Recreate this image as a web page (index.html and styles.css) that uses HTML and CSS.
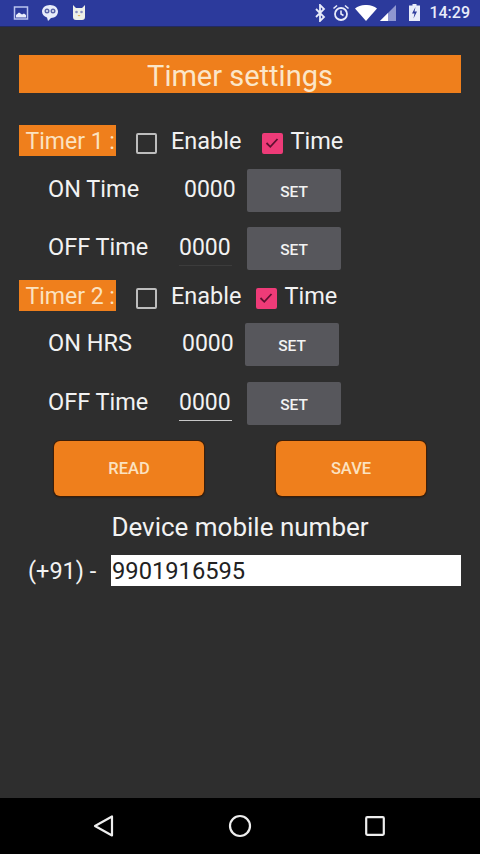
FILE: index.html
```html
<!DOCTYPE html>
<html lang="en">
<head>
<meta charset="utf-8">
<title>Timer settings</title>
<link rel="stylesheet" href="styles.css">
</head>
<body>
<div class="statusbar">
  <div class="status-left">
    <svg class="ic" width="16" height="16" viewBox="0 0 16 16"><rect x="1.5" y="2" width="13" height="12" fill="none" stroke="#b9c3ee" stroke-width="1.5"/><path d="M3 12.5V10l3-2.5 3 2 2-1 2 1.5v2.500z" fill="#e8ecfa"/></svg>
    <svg class="ic" width="20" height="18" viewBox="0 0 20 18"><path d="M10 1c4.500 0 8 2.800 8 6.500S15 14 11 14l-3 3-1-3.500C4 12.500 2 10.500 2 7.500 2 3.800 5.500 1 10 1z" fill="#e8ecfa"/><circle cx="7" cy="7" r="2.500" fill="#5a64a8"/><circle cx="13" cy="7" r="2.500" fill="#5a64a8"/><circle cx="7" cy="7" r="1" fill="#e8ecfa"/><circle cx="13" cy="7" r="1" fill="#e8ecfa"/></svg>
    <svg class="ic" width="16" height="18" viewBox="0 0 16 18"><path d="M2 1l3 3h6l3-3v12a3 3 0 0 1-3 3H5a3 3 0 0 1-3-3z" fill="#eef0e8"/><circle cx="5.500" cy="8" r="1.300" fill="#8a8fc0"/><circle cx="10.500" cy="8" r="1.300" fill="#8a8fc0"/><path d="M6.500 11h3l-1.500 1.500z" fill="#e0b050"/></svg>
  </div>
  <div class="status-right">
    <svg width="14" height="18" viewBox="0 0 14 18"><path d="M3 5l8 8-4 4V1l4 4-8 8" fill="none" stroke="#e8ecfa" stroke-width="1.800"/></svg>
    <svg width="18" height="18" viewBox="0 0 18 18"><circle cx="9" cy="10" r="6" fill="none" stroke="#e8ecfa" stroke-width="1.800"/><path d="M9 6.500V10l2.500 1.500M1.500 4.500L5 1.500M16.500 4.500L13 1.500" fill="none" stroke="#e8ecfa" stroke-width="1.600"/></svg>
    <svg width="22" height="16" viewBox="0 0 22 16"><path d="M0 3.500C6-1.200 16-1.200 22 3.500L11 16z" fill="#fff"/></svg>
    <svg class="sig" width="16" height="16" viewBox="0 0 16 16"><path d="M16 0v16H0z" fill="#8f97d0"/><path d="M8 8v8H0z" fill="#fff"/></svg>
    <svg class="bat" width="11" height="17" viewBox="0 0 11 17"><path d="M3.500 0h4v1.500H11V17H0V1.500h3.500z" fill="#e8ecfa"/><path d="M6.500 3L3 9.500h2.500L4.500 14.500 8 7.500H5.500z" fill="#2c3a9c"/></svg>
    <span class="clock">14:29</span>
  </div>
</div>

<main class="screen">
  <h1 class="title">Timer settings</h1>

  <div class="timer-row first">
    <span class="tag">Timer 1 :</span>
    <span class="box"></span>
    <span class="opt enable">Enable</span>
    <span class="box on on-a"><svg width="14" height="12" viewBox="0 0 14 12"><path d="M1.500 6l3.800 3.800L12.500 2" fill="none" stroke="#5e1030" stroke-width="1.800"/></svg></span>
    <span class="opt time-a">Time</span>
  </div>
  <div class="set-row r1">
    <span class="name">ON Time</span>
    <span class="val v1">0000</span>
    <button class="set">SET</button>
  </div>
  <div class="set-row r2">
    <span class="name">OFF Time</span>
    <span class="val v2 faint">0000</span>
    <button class="set">SET</button>
  </div>

  <div class="timer-row second">
    <span class="tag">Timer 2 :</span>
    <span class="box"></span>
    <span class="opt enable">Enable</span>
    <span class="box on on-b"><svg width="14" height="12" viewBox="0 0 14 12"><path d="M1.500 6l3.800 3.800L12.500 2" fill="none" stroke="#5e1030" stroke-width="1.800"/></svg></span>
    <span class="opt time-b">Time</span>
  </div>
  <div class="set-row r3">
    <span class="name">ON HRS</span>
    <span class="val v3">0000</span>
    <button class="set">SET</button>
  </div>
  <div class="set-row r4">
    <span class="name">OFF Time</span>
    <span class="val v2 line">0000</span>
    <button class="set">SET</button>
  </div>

  <div class="actions">
    <button class="action">READ</button>
    <button class="action">SAVE</button>
  </div>

  <p class="device">Device mobile number</p>
  <div class="phone">
    <span class="prefix">(+91) -</span>
    <span class="number">9901916595</span>
  </div>
</main>

<nav class="navbar">
  <svg width="22" height="24" viewBox="0 0 22 24"><path d="M2 12L19 2.500v19z" fill="none" stroke="#eee" stroke-width="2.200" stroke-linejoin="round"/></svg>
  <svg width="24" height="24" viewBox="0 0 24 24"><circle cx="12" cy="12" r="10" fill="none" stroke="#eee" stroke-width="2.200"/></svg>
  <svg width="20" height="20" viewBox="0 0 20 20"><rect x="1.200" y="1.200" width="17.600" height="17.600" rx="1" fill="none" stroke="#eee" stroke-width="2.200"/></svg>
</nav>
</body>
</html>
```
FILE: styles.css
```css
* { box-sizing: border-box; }
html, body { margin: 0; padding: 0; }
body {
  width: 480px;
  height: 854px;
  display: flex;
  flex-direction: column;
  background: #2e2e2e;
  color: #f2f2f2;
  font-family: Roboto, "Liberation Sans", sans-serif;
  overflow: hidden;
}
.statusbar {
  height: 27px;
  flex: none;
  background: #2c3a9c;
  border-bottom: 1px solid #222a60;
  display: flex;
  justify-content: space-between;
  align-items: center;
  padding: 0 10px 1px 13px;
}
.status-left { display: flex; align-items: center; gap: 11px; }
.status-right { display: flex; align-items: center; gap: 5px; }
.status-right .sig { margin-left: -2px; }
.status-right .bat { margin-left: 8px; }
.clock { font-size: 16px; font-weight: 500; color: #e8ecfa; margin-left: 4px; }
.screen { flex: 1; padding: 28px 19px 0; }
.title {
  margin: 0;
  height: 38px;
  background: #ef7f1c;
  color: #fbe6c8;
  font-size: 29px;
  font-weight: 400;
  line-height: 42px;
  text-align: center;
}
.timer-row { display: flex; align-items: center; height: 31px; font-size: 23.500px; }
.timer-row.first { margin-top: 32px; }
.timer-row.second { margin-top: 10px; }
.tag {
  width: 97px;
  height: 31px;
  background: #ef7f1c;
  color: #fbe2c0;
  font-size: 23px;
  line-height: 34px;
  padding-left: 6.500px;
  white-space: nowrap;
  overflow: hidden;
}
.box {
  width: 21px;
  height: 21px;
  margin: 5px 0 0 20px;
  border: 2px solid #bdbdbd;
  border-radius: 2px;
  display: flex;
  align-items: center;
  justify-content: center;
  flex: none;
}
.box.on { background: #ee3b78; border-color: #ee3b78; }
.on-a { margin-left: 20px; }
.on-b { margin-left: 14px; }
.opt { margin-top: 1px; }
.enable { margin-left: 14px; }
.time-a, .time-b { margin-left: 8px; }
.set-row { display: flex; align-items: center; height: 43px; font-size: 23.500px; padding-left: 29px; }
.r1 { margin-top: 13px; }
.r2 { margin-top: 15px; }
.r3 { margin-top: 12px; }
.r4 { margin-top: 16px; }
.name { width: 150px; margin-top: -3px; }
.val { display: block; height: 35px; line-height: 34px; white-space: nowrap; font-size: 23px; }
.v1 { margin-left: -14px; width: 63px; }
.v2 { margin-left: -19px; width: 53px; margin-right: 15px; }
.v3 { margin-left: -16px; width: 63px; }
.faint { border-bottom: 1px solid #3c3c3c; }
.line { border-bottom: 1px solid #c8c8c8; }
.set {
  width: 94px;
  height: 43px;
  border: 0;
  border-radius: 2px;
  background: #57575c;
  color: #f2f2f2;
  font-family: inherit;
  font-size: 15.500px;
  font-weight: 500;
  padding: 2px 0 0;
}
.actions { display: flex; gap: 72px; margin: 16px 0 0 35px; }
.action {
  width: 150px;
  height: 55px;
  border: 0;
  border-radius: 6px;
  background: #ef7f1c;
  box-shadow: 0 0 0 1px #3c1e08, 0 1px 2px #1c1108;
  color: #fbe2c0;
  font-family: inherit;
  font-size: 16.500px;
  font-weight: 500;
}
.device { margin: 17px 0 0; font-size: 26px; line-height: 28px; text-align: center; }
.phone { display: flex; align-items: center; margin-top: 14px; height: 31px; }
.prefix { width: 92px; padding-left: 9px; font-size: 23.500px; }
.number {
  flex: 1;
  height: 31px;
  background: #fff;
  color: #222;
  font-size: 23.700px;
  line-height: 33px;
  padding-left: 1px;
}
.navbar {
  height: 56px;
  flex: none;
  background: #000;
  display: flex;
  align-items: center;
  justify-content: space-between;
  padding: 0 95px 0 93px;
}
```
